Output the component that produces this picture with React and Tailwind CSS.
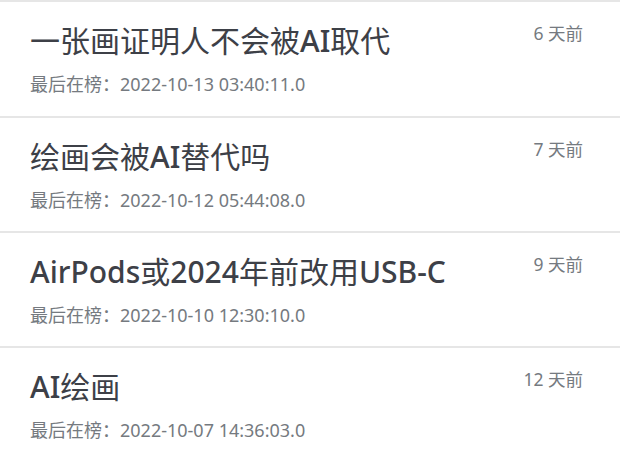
import React from 'react';

// Lista de temas con fecha de último ranking
const items = [
    { title: '一张画证明人不会被AI取代', date: '2022-10-13 03:40:11.0', ago: '6 天前' },
    { title: '绘画会被AI替代吗', date: '2022-10-12 05:44:08.0', ago: '7 天前' },
    { title: 'AirPods或2024年前改用USB-C', date: '2022-10-10 12:30:10.0', ago: '9 天前' },
    { title: 'AI绘画', date: '2022-10-07 14:36:03.0', ago: '12 天前' },
];

// Los tramos latinos se ven más gruesos que los caracteres chinos
const Title = ({ text }) => (
    <>
        {text.split(/([A-Za-z0-9-]+)/).filter(Boolean).map((part, i) =>
            /^[A-Za-z0-9-]+$/.test(part)
                ? <span key={i} className="font-medium">{part}</span>
                : <span key={i}>{part}</span>
        )}
    </>
);

const App = () => {
    return (
        <div
            className="w-[620px] h-[460px] overflow-hidden bg-white"
            style={{ fontFamily: '"Noto Sans", "Noto Sans CJK SC", sans-serif' }}
        >
            {items.map((item, idx) => (
                <div
                    key={item.title}
                    className={`${idx === 0 ? 'h-[116px]' : 'h-[115px]'} border-t-2 border-[#e6e6e6] flex justify-between items-start pl-[30px] pr-[37px] pt-[19px]`}
                >
                    <div className="flex flex-col">
                        <div className="text-[30px] leading-[40px] text-[#3d4047] whitespace-nowrap">
                            <Title text={item.title} />
                        </div>
                        <div className="mt-[10px] text-[18px] leading-[26px] text-[#757a80]">
                            最后在榜：{item.date}
                        </div>
                    </div>
                    <div className="-mt-px text-[17.5px] leading-[26px] text-[#757a80]">{item.ago}</div>
                </div>
            ))}
        </div>
    );
};

export default App;
